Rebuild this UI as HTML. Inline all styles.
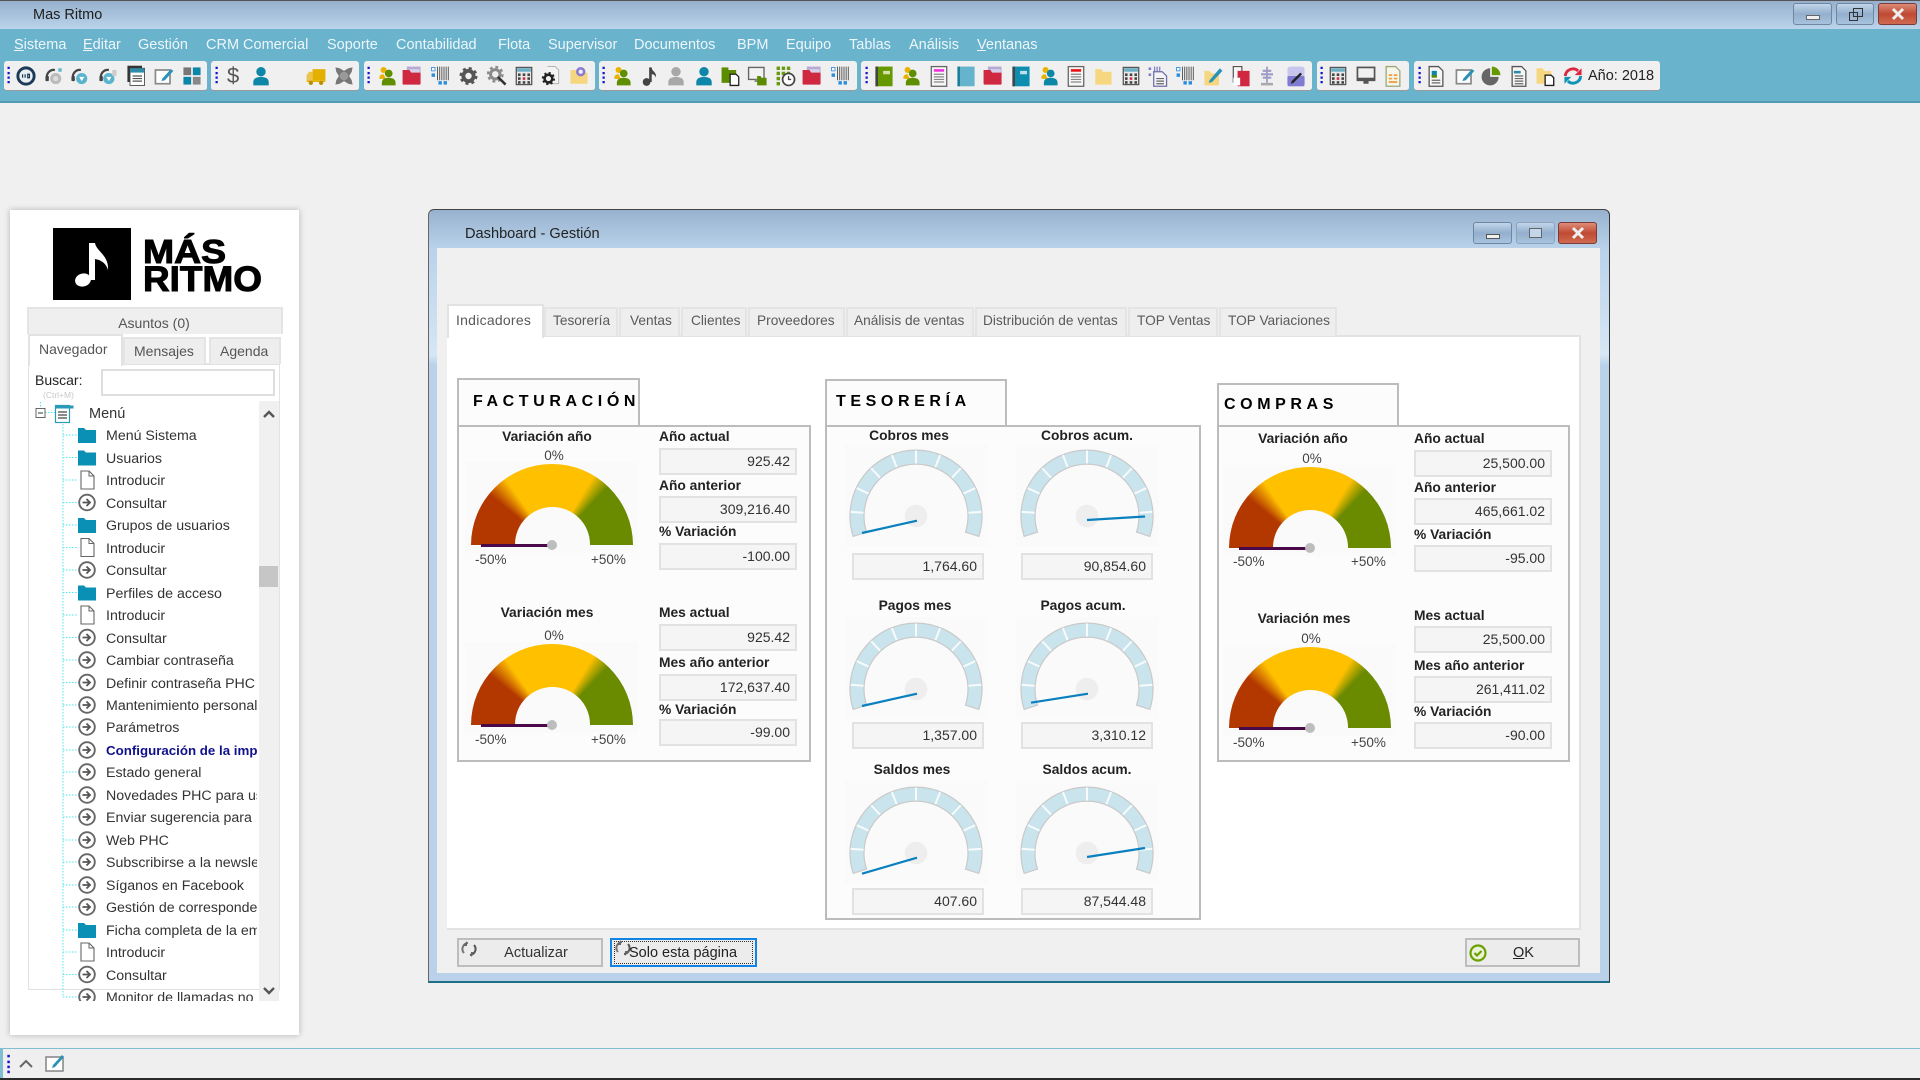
<!DOCTYPE html>
<html lang="es"><head><meta charset="utf-8"><title>Mas Ritmo</title>
<style>
html,body{margin:0;padding:0;width:1920px;height:1080px;overflow:hidden;background:#f0f0f0}
#root{position:relative;width:1920px;height:1080px;overflow:hidden;font-family:"Liberation Sans",sans-serif;font-size:14.5px;color:#333;filter:blur(.35px)}
#root div,#root span,#root svg{position:absolute}
#root u{position:static}
.t{white-space:nowrap;line-height:20px;height:20px}
.c{transform:translateX(-50%)}
.m{color:#eef6fa;top:35px}
.tb{top:61px;height:30px;background:#f0f0f0;border-radius:3px;border-bottom:1px solid #9a9a9a;box-sizing:border-box}
.wb{box-sizing:border-box;border:1px solid #6f86a3;border-radius:3px;background:linear-gradient(#c2d5ea,#93afcd 50%,#a8c3de)}
.wx{box-sizing:border-box;border:1px solid #7b3b3b;border-radius:3px;background:linear-gradient(#dd8c78,#bf4a33 50%,#cf6a50)}
.ptab{box-sizing:border-box;background:#eee;border:2px solid #e4e4e4;border-bottom:none}
.pl{font-size:13.7px;color:#5a5a5a}
.h{font-size:16px;font-weight:bold;color:#000;letter-spacing:4.6px}
.box{box-sizing:border-box;border:2px solid #bcbcbc;background:#fcfcfc}
.t.b{font-weight:bold;font-size:13.8px;color:#222;line-height:22px;height:22px}
.t.s{font-size:13.5px;color:#444;line-height:22px;height:22px}
.f{box-sizing:border-box;height:27px;width:138px;background:#f5f5f5;border:2px solid #e2e2e2;text-align:right;padding-right:5px;line-height:23px;font-size:14px;color:#333}
.f2{width:132px}
.cg{width:173px;height:91px;background:#fafafa}
.arc{left:6px;top:1.7px;width:162px;height:81px;overflow:hidden}
.disc{left:0;top:0;width:162px;height:162px;border-radius:50%;background:conic-gradient(from -90deg,#b33800 0 39deg,#ffc000 55deg 121deg,#6a8a00 134deg 180deg,transparent 180deg)}
.hole{left:43.5px;top:43.5px;width:75px;height:75px;border-radius:50%;background:#fafafa}
.nd{left:16px;top:82px;width:71px;height:2.5px;background:#4a0a4a}
.hub{left:82px;top:78px;width:10px;height:10px;border-radius:50%;background:#bdbdbd}
.sg{width:143px;height:102px;background:#fafafa}
.r{left:106px;width:151px;overflow:hidden;white-space:nowrap;line-height:22px;height:22px;color:#333;font-size:14.2px}
.btn{box-sizing:border-box;top:938px;height:29px;background:#ececec;border:2px solid #bdbdbd}
</style></head><body><div id="root">

<svg width="0" height="0" style="position:absolute">
<defs>
<symbol id="s-clk" viewBox="-2 -2 28 28"><circle cx="12" cy="12" r="9.500" fill="#e8eef2" stroke="#1d3b57" stroke-width="3.400"/><path d="M8 10v4M11 10v4M14 10h2v4h-2z" stroke="#1d3b57" stroke-width="1.400" fill="none"/></symbol>
<symbol id="s-hs1" viewBox="-2 -2 28 28"><path d="M4 15a8 8 0 0 1 9-10" fill="none" stroke="#444" stroke-width="2.600"/><rect x="2" y="12" width="4" height="6" rx="1" fill="#444"/><circle cx="14" cy="15" r="6.500" fill="#bbb"/><circle cx="14" cy="15" r="3" fill="#ddd"/><rect x="17" y="3" width="4" height="4" fill="#5fb8d0"/></symbol>
<symbol id="s-hs2" viewBox="-2 -2 28 28"><path d="M4 15a8 8 0 0 1 9-10" fill="none" stroke="#444" stroke-width="2.600"/><rect x="2" y="12" width="4" height="6" rx="1" fill="#444"/><circle cx="14" cy="15" r="6.500" fill="#5ab4ce"/><path d="M11 13l3 5 3-5z" fill="#fff"/></symbol>
<symbol id="s-hs3" viewBox="-2 -2 28 28"><path d="M4 15a8 8 0 0 1 9-10" fill="none" stroke="#444" stroke-width="2.600"/><rect x="2" y="12" width="4" height="6" rx="1" fill="#444"/><circle cx="13" cy="15" r="6.500" fill="#5ab4ce"/><path d="M10 13l3 5 3-5z" fill="#fff"/><rect x="17" y="5" width="5" height="7" fill="#ccc"/></symbol>
<symbol id="s-pg" viewBox="-2 -2 28 28"><rect x="2" y="0" width="17" height="19" fill="#333"/><rect x="5" y="3" width="17" height="20" fill="#fff" stroke="#444"/><rect x="5" y="3" width="17" height="5" fill="#2d8ca8"/><path d="M8 12h11M8 15h11M8 18h11" stroke="#555" stroke-width="1.400"/></symbol>
<symbol id="s-pen" viewBox="-2 -2 28 28"><rect x="2" y="5" width="17" height="16" fill="#fff" stroke="#8a8a8a" stroke-width="2"/><path d="M10 15l10-11 3 2-10 11-4 1z" fill="#2a93b5"/></symbol>
<symbol id="s-tile" viewBox="-2 -2 28 28"><rect x="2" y="2" width="9" height="9" fill="#777"/><rect x="13" y="2" width="9" height="9" fill="#0a86a8"/><rect x="2" y="13" width="9" height="9" fill="#0a86a8"/><rect x="13" y="13" width="9" height="9" fill="#888"/></symbol>
<symbol id="s-p" viewBox="-2 -2 28 28"><circle cx="12" cy="7" r="5.500" fill="currentColor"/><path d="M3 23v-4c0-4 4-6 9-6s9 2 9 6v4z" fill="currentColor"/></symbol>
<symbol id="s-py" viewBox="-2 -2 28 28"><circle cx="8" cy="5" r="3.500" fill="#e9b100"/><path d="M3 15c0-4 2-5 5-5l3 6z" fill="#e9b100"/><circle cx="14" cy="9" r="4.500" fill="currentColor"/><path d="M6 23v-3c0-4 3-6 8-6s8 2 8 6v3z" fill="currentColor"/></symbol>
<symbol id="s-trk" viewBox="-2 -2 28 28"><rect x="8" y="4" width="15" height="13" fill="#e4b000"/><path d="M1 11l3-4h4v10H1z" fill="#eec34a"/><rect x="1" y="17" width="22" height="2" fill="#e4b000"/><circle cx="6" cy="20" r="2.500" fill="#b98f00"/><circle cx="18" cy="20" r="2.500" fill="#b98f00"/></symbol>
<symbol id="s-x" viewBox="-2 -2 28 28"><path d="M2 2l5 1 5 3 5-3 5-1-1 5-3 5 3 5 1 5-5-1-5-3-5 3-5 1 1-5 3-5-3-5z" fill="#777"/><circle cx="12" cy="12" r="5" fill="#999"/></symbol>
<symbol id="s-fr" viewBox="-2 -2 28 28"><rect x="6" y="1" width="16" height="14" fill="#b7a9d6"/><rect x="9" y="4" width="12" height="5" fill="#d8d0ea"/><path d="M1 5h8l2 3h11v13a1 1 0 0 1-1 1H2a1 1 0 0 1-1-1z" fill="#cf2840"/></symbol>
<symbol id="s-bc" viewBox="-2 -2 28 28"><g stroke="#444" stroke-width="1"><path d="M8 1v16M10.500 1v16M13 1v16M15.500 1v16M18 1v16M20.500 1v16"/></g><rect x="1" y="2" width="4" height="4" fill="#fff" stroke="#2b8de0"/><rect x="1" y="9" width="4" height="4" fill="#2b8de0"/><rect x="9" y="18" width="4" height="4" fill="#2b8de0"/><rect x="15" y="18" width="4" height="4" fill="#2b8de0"/></symbol>
<symbol id="s-gear" viewBox="-2 -2 28 28"><circle cx="12" cy="12" r="6" fill="none" stroke="#555" stroke-width="4.500"/><circle cx="12" cy="12" r="9" fill="none" stroke="#555" stroke-width="3" stroke-dasharray="3.500 3.570"/></symbol>
<symbol id="s-gs" viewBox="-2 -2 28 28"><circle cx="10" cy="10" r="5.500" fill="none" stroke="#8a8a8a" stroke-width="3.500"/><circle cx="10" cy="10" r="8.500" fill="none" stroke="#8a8a8a" stroke-width="2.600" stroke-dasharray="3.300 3.350"/><path d="M13 13l9 9" stroke="#333" stroke-width="3"/></symbol>
<symbol id="s-calc" viewBox="-2 -2 28 28"><rect x="3" y="2" width="18" height="20" fill="#e9e9e9" stroke="#555" stroke-width="1.500"/><rect x="4" y="3" width="16" height="4" fill="#6ab0c7"/><g fill="#444"><rect x="5" y="9" width="3" height="3"/><rect x="10.500" y="9" width="3" height="3"/><rect x="16" y="9" width="3" height="3"/><rect x="5" y="13.500" width="3" height="3"/><rect x="16" y="13.500" width="3" height="3"/><rect x="5" y="18" width="3" height="3"/><rect x="10.500" y="18" width="3" height="3"/><rect x="16" y="18" width="3" height="3"/></g><rect x="10.500" y="13.500" width="3" height="3" fill="#d02a3e"/></symbol>
<symbol id="s-gd" viewBox="-2 -2 28 28"><path d="M8 1h9l4 4v16H10" fill="#f4f4f4" stroke="#aaa"/><circle cx="9" cy="15" r="4.500" fill="none" stroke="#222" stroke-width="3"/><circle cx="9" cy="15" r="6.500" fill="none" stroke="#222" stroke-width="2.400" stroke-dasharray="2.500 2.600"/></symbol>
<symbol id="s-fg" viewBox="-2 -2 28 28"><path d="M2 5h6l2 3h12v13H2z" fill="#f6d67f"/><circle cx="14" cy="7" r="4" fill="#f0f0f0" stroke="#8b7bd0" stroke-width="3"/></symbol>
<symbol id="s-note" viewBox="-2 -2 28 28"><circle cx="8" cy="19" r="4.500" fill="#444"/><path d="M11 19V2h3c0 5 6 5 5 12-1-3-3-4-5-4v9z" fill="#444"/></symbol>
<symbol id="s-gdoc" viewBox="-2 -2 28 28"><rect x="1" y="2" width="8" height="4" fill="#5b8c00"/><rect x="1" y="5" width="17" height="15" fill="#5b8c00"/><path d="M11 10h7l3 3v10H11z" fill="#fff" stroke="#222" stroke-width="1.500"/></symbol>
<symbol id="s-mon2" viewBox="-2 -2 28 28"><rect x="1" y="2" width="18" height="14" fill="#f2f2f2" stroke="#666" stroke-width="1.600"/><rect x="8" y="16" width="5" height="3" fill="#888"/><path d="M11 12h4l1 2h6v9H11z" fill="#5b8c00"/></symbol>
<symbol id="s-grid" viewBox="-2 -2 28 28"><g fill="#6a9a10"><rect x="1" y="1" width="4" height="4"/><rect x="7" y="1" width="4" height="4"/><rect x="13" y="1" width="4" height="4"/><rect x="1" y="7" width="4" height="4"/><rect x="7" y="7" width="4" height="4"/><rect x="13" y="7" width="4" height="4"/><rect x="1" y="13" width="4" height="4"/><rect x="1" y="19" width="4" height="4"/></g><circle cx="15" cy="16" r="7" fill="#fff" stroke="#444" stroke-width="2"/><path d="M15 12v4h3" stroke="#444" fill="none" stroke-width="1.500"/></symbol>
<symbol id="s-gb" viewBox="-2 -2 28 28"><rect x="2" y="1" width="20" height="23" fill="#669900"/><rect x="2" y="1" width="3" height="23" fill="#444"/><rect x="11" y="6" width="8" height="4" fill="#d5e0b0"/></symbol>
<symbol id="s-tk" viewBox="-2 -2 28 28"><rect x="2" y="1" width="20" height="23" fill="#0d8db0"/><rect x="2" y="1" width="3" height="23" fill="#444"/><rect x="11" y="6" width="8" height="4" fill="#bfe0ea"/></symbol>
<symbol id="s-tb2" viewBox="-2 -2 28 28"><rect x="2" y="1" width="20" height="23" fill="#65b3cc"/><rect x="2" y="1" width="3" height="23" fill="#1b7f9c"/></symbol>
<symbol id="s-pm" viewBox="-2 -2 28 28"><rect x="3" y="1" width="18" height="23" fill="#f6f6f6" stroke="#666" stroke-width="1.500"/><rect x="6" y="4" width="12" height="3" fill="currentColor"/><path d="M6 10h12M6 13h12M6 16h12M6 19h12" stroke="#888" stroke-width="1.400"/></symbol>
<symbol id="s-fy" viewBox="-2 -2 28 28"><path d="M3 4h7l2 3h10v15H3z" fill="#f6d67f"/></symbol>
<symbol id="s-dbc" viewBox="-2 -2 28 28"><g fill="#7f7fc8"><rect x="1" y="2" width="3" height="3"/><rect x="1" y="9" width="3" height="3"/><path d="M8 1v8M11 1v8M14 1v8" stroke="#7f7fc8" stroke-width="1.500"/></g><path d="M7 7h10l5 5v12H7z" fill="#f4f4f8" stroke="#6f6fa8" stroke-width="1.500"/><path d="M10 15h9M10 18h9M10 21h9" stroke="#666" stroke-width="1.400"/></symbol>
<symbol id="s-fp" viewBox="-2 -2 28 28"><path d="M2 6h6l2 3h9v14H2z" fill="#f6d67f"/><path d="M8 17L20 3l3 3-12 13-4 1z" fill="#2a93b5"/></symbol>
<symbol id="s-rd" viewBox="-2 -2 28 28"><path d="M3 1h10v18H3z" fill="#f6f6f6" stroke="#555" stroke-width="1.400"/><path d="M8 6h14v18H8z" fill="#cf2840"/><path d="M3 14h8v9H3z" fill="#fff"/></symbol>
<symbol id="s-tw" viewBox="-2 -2 28 28"><rect x="11" y="1" width="2" height="19" fill="#9e9bbf"/><path d="M7 6h10M5 10h14M7 14h10" stroke="#9e9bc8" stroke-width="2.500"/><rect x="5" y="20" width="14" height="3" fill="#aaa"/></symbol>
<symbol id="s-pp" viewBox="-2 -2 28 28"><rect x="2" y="1" width="20" height="23" rx="3" fill="#c9c6ee"/><rect x="2" y="12" width="20" height="12" rx="2" fill="#7e7bd0"/><path d="M7 18L17 8l2 2L9 20l-3 1z" fill="#222"/></symbol>
<symbol id="s-mon" viewBox="-2 -2 28 28"><rect x="2" y="2" width="20" height="15" fill="#f0f0f0" stroke="#555" stroke-width="2"/><rect x="2" y="14" width="20" height="3" fill="#555"/><rect x="9" y="17" width="6" height="4" fill="#555"/></symbol>
<symbol id="s-do" viewBox="-2 -2 28 28"><path d="M4 1h11l5 5v18H4z" fill="#f5f5ea" stroke="#9aa878" stroke-width="1.500"/><path d="M7 11h4M13 11h4M7 15h4M13 15h4M7 19h10" stroke="#f09a3a" stroke-width="2"/></symbol>
<symbol id="s-dc" viewBox="-2 -2 28 28"><path d="M4 1h11l5 5v18H4z" fill="#f6f6f6" stroke="#555" stroke-width="1.500"/><rect x="7" y="6" width="6" height="7" fill="#0a86a8"/><rect x="7" y="11" width="6" height="3" fill="#5b8c00"/><path d="M7 17h10M7 20h10" stroke="#666" stroke-width="1.400"/></symbol>
<symbol id="s-pie" viewBox="-2 -2 28 28"><path d="M11 3a10 10 0 1 0 10 10H11z" fill="#666"/><path d="M13 1a10 10 0 0 1 10 10H13z" fill="#669900"/></symbol>
<symbol id="s-dl" viewBox="-2 -2 28 28"><path d="M4 1h11l5 5v18H4z" fill="#f6f6f6" stroke="#555" stroke-width="1.500"/><rect x="6" y="6" width="8" height="3" fill="#2d8ca8"/><path d="M7 12h10M7 15h10M7 18h10M7 21h10" stroke="#666" stroke-width="1.400"/></symbol>
<symbol id="s-fd" viewBox="-2 -2 28 28"><path d="M1 3h7l2 3h8v15H1z" fill="#f6d67f"/><path d="M11 11h7l3 3v9H11z" fill="#fff" stroke="#222" stroke-width="1.600"/></symbol>
<symbol id="s-sync" viewBox="-2 -2 28 28"><path d="M3 12a9 9 0 0 1 15-6" fill="none" stroke="#d9283f" stroke-width="3.400"/><path d="M22 3v8h-8z" fill="#d9283f"/><path d="M21 12a9 9 0 0 1-15 6" fill="none" stroke="#0f93b5" stroke-width="3.400"/><path d="M2 21v-8h8z" fill="#0f93b5"/></symbol>
<symbol id="s-grip" viewBox="0 0 4 24"><g fill="#1515d0"><rect x="0" y="1" width="3" height="3"/><rect x="0" y="8" width="3" height="3"/><rect x="0" y="14" width="3" height="3"/><rect x="0" y="20" width="3" height="3"/></g></symbol>
<symbol id="t-f" viewBox="0 0 20 20"><path d="M1 3h6l2 2h10v13H1z" fill="#0a8fb5"/></symbol>
<symbol id="t-d" viewBox="0 0 20 20"><path d="M4 1h8l5 5v13H4z" fill="#fff" stroke="#666" stroke-width="1.100"/><path d="M12 1v5h5" fill="none" stroke="#666" stroke-width="1"/></symbol>
<symbol id="t-c" viewBox="0 0 20 20"><circle cx="10" cy="10" r="7.800" fill="#fff" stroke="#666" stroke-width="1.900"/><path d="M5.500 10h7M9.500 6.500l3.500 3.500-3.500 3.500" fill="none" stroke="#555" stroke-width="1.800"/></symbol>
<symbol id="g-sp" viewBox="-72 -72 144 102">
<path d="M-62.800 20.400A66 66 0 1 1 62.800 20.400L49.500 16.070A52 52 0 1 0-49.500 16.070Z" fill="#c9e4ec" stroke="#c9c9c9" stroke-width="1.200"/>
<g stroke="#f8fbfc" stroke-width="2">
<path d="M0-52.500V-65.500" /><path d="M0-52.500V-65.500" transform="rotate(21.600)"/><path d="M0-52.500V-65.500" transform="rotate(43.200)"/><path d="M0-52.500V-65.500" transform="rotate(64.800)"/><path d="M0-52.500V-65.500" transform="rotate(86.400)"/><path d="M0-52.500V-65.500" transform="rotate(-21.600)"/><path d="M0-52.500V-65.500" transform="rotate(-43.200)"/><path d="M0-52.500V-65.500" transform="rotate(-64.800)"/><path d="M0-52.500V-65.500" transform="rotate(-86.400)"/>
</g>
<circle cx="0" cy="0" r="11.300" fill="#eeeeee"/></symbol>
<symbol id="i-rf" viewBox="0 0 16 16"><path d="M7 2A6 6 0 0 0 3 12" fill="none" stroke="#777" stroke-width="2"/><path d="M9 14a6 6 0 0 0 4-10" fill="none" stroke="#555" stroke-width="2"/><path d="M6 0v5H2zM10 16v-5h4z" fill="#666"/></symbol>
</defs></svg>

<!-- main title -->
<div style="left:0;top:0;width:1920px;height:1px;background:#555"></div>
<div style="left:0;top:1px;width:1920px;height:28px;background:linear-gradient(#97b0cd,#bbd4eb)"></div>
<div class="t" style="left:33px;top:5px;color:#1e1e1e;font-size:14.5px">Mas Ritmo</div>
<div class="wb" style="left:1793px;top:3px;width:39px;height:22px"><div style="left:12px;top:11px;width:14px;height:5px;background:#f0f0f0;border:1px solid #666;box-sizing:border-box"></div></div>
<div class="wb" style="left:1836px;top:3px;width:38px;height:22px"><div style="left:12px;top:8px;width:9px;height:9px;border:1.500px solid #333;box-sizing:border-box"></div><div style="left:16px;top:4px;width:10px;height:9px;border:1.500px solid #333;box-sizing:border-box"></div></div>
<div class="wx" style="left:1878px;top:3px;width:39px;height:22px"><svg style="left:12px;top:3px" width="14" height="14" viewBox="0 0 14 14"><path d="M2 2l10 10M12 2L2 12" stroke="#eee" stroke-width="3"/></svg></div>

<!-- menu -->
<div style="left:0;top:29px;width:1920px;height:72px;background:#69b3cc"></div>
<div style="left:0;top:101px;width:1920px;height:2px;background:#4f9cb4"></div>
<div class="t m" style="left:14px"><u>S</u>istema</div>
<div class="t m" style="left:83px"><u>E</u>ditar</div>
<div class="t m" style="left:138px">Gestión</div>
<div class="t m" style="left:206px">CRM Comercial</div>
<div class="t m" style="left:327px">Soporte</div>
<div class="t m" style="left:396px">Contabilidad</div>
<div class="t m" style="left:498px">Flota</div>
<div class="t m" style="left:548px">Supervisor</div>
<div class="t m" style="left:634px">Documentos</div>
<div class="t m" style="left:737px">BPM</div>
<div class="t m" style="left:786px">Equipo</div>
<div class="t m" style="left:849px">Tablas</div>
<div class="t m" style="left:909px">Análisis</div>
<div class="t m" style="left:977px"><u>V</u>entanas</div>

<!-- toolbars -->
<div class="tb" style="left:4px;width:203px"></div>
<div class="tb" style="left:211px;width:148px"></div>
<div class="tb" style="left:364px;width:231px"></div>
<div class="tb" style="left:599px;width:258px"></div>
<div class="tb" style="left:861px;width:451px"></div>
<div class="tb" style="left:1317px;width:92px"></div>
<div class="tb" style="left:1414px;width:246px"></div>
<svg style="left:0;top:0" width="1920" height="120" viewBox="0 0 1920 120">
<g transform="translate(0,-18)">
<use href="#s-grip" x="7" y="84" width="4" height="18"/><use href="#s-grip" x="215" y="84" width="4" height="18"/><use href="#s-grip" x="367" y="84" width="4" height="18"/><use href="#s-grip" x="602" y="84" width="4" height="18"/><use href="#s-grip" x="865" y="84" width="4" height="18"/><use href="#s-grip" x="1320" y="84" width="4" height="18"/><use href="#s-grip" x="1418" y="84" width="4" height="18"/>
<use href="#s-clk" x="14" y="82" width="24" height="24"/><use href="#s-hs1" x="42" y="82" width="24" height="24"/><use href="#s-hs2" x="68" y="82" width="24" height="24"/><use href="#s-hs3" x="96" y="82" width="24" height="24"/><use href="#s-pg" x="124" y="82" width="24" height="24"/><use href="#s-pen" x="152" y="82" width="24" height="24"/><use href="#s-tile" x="180" y="82" width="24" height="24"/>
<use href="#s-p" x="249" y="82" width="24" height="24" style="color:#0d86a8"/><use href="#s-trk" x="304" y="82" width="24" height="24"/><use href="#s-x" x="332" y="82" width="24" height="24"/>
<use href="#s-py" x="375" y="82" width="24" height="24" style="color:#5f8f00"/><use href="#s-fr" x="400" y="82" width="24" height="24"/><use href="#s-bc" x="429" y="82" width="24" height="24"/><use href="#s-gear" x="456.500" y="82" width="24" height="24"/><use href="#s-gs" x="485" y="82" width="24" height="24"/><use href="#s-calc" x="512" y="82" width="24" height="24"/><use href="#s-gd" x="539" y="82" width="24" height="24"/><use href="#s-fg" x="567" y="82" width="24" height="24"/>
<use href="#s-py" x="610" y="82" width="24" height="24" style="color:#5f8f00"/><use href="#s-note" x="638" y="82" width="24" height="24"/><use href="#s-p" x="664" y="82" width="24" height="24" style="color:#a8a8a8"/><use href="#s-p" x="692" y="82" width="24" height="24" style="color:#0d86a8"/><use href="#s-gdoc" x="719" y="82" width="24" height="24"/><use href="#s-mon2" x="746" y="82" width="24" height="24"/><use href="#s-grid" x="774" y="82" width="24" height="24"/><use href="#s-fr" x="800" y="82" width="24" height="24"/><use href="#s-bc" x="829" y="82" width="24" height="24"/>
<use href="#s-gb" x="872" y="82" width="24" height="24"/><use href="#s-py" x="899" y="82" width="24" height="24" style="color:#5f8f00"/><use href="#s-pm" x="927" y="82" width="24" height="24" style="color:#ee2fe0"/><use href="#s-tb2" x="954" y="82" width="24" height="24"/><use href="#s-fr" x="981" y="82" width="24" height="24"/><use href="#s-tk" x="1009" y="82" width="24" height="24"/><use href="#s-py" x="1037" y="82" width="24" height="24" style="color:#0d86a8"/><use href="#s-pm" x="1064" y="82" width="24" height="24" style="color:#e81010"/><use href="#s-fy" x="1091" y="82" width="24" height="24"/><use href="#s-calc" x="1119" y="82" width="24" height="24"/><use href="#s-dbc" x="1146" y="82" width="24" height="24"/><use href="#s-bc" x="1174" y="82" width="24" height="24"/><use href="#s-fp" x="1201" y="82" width="24" height="24"/><use href="#s-rd" x="1229" y="82" width="24" height="24"/><use href="#s-tw" x="1255" y="82" width="24" height="24"/><use href="#s-pp" x="1284" y="82" width="24" height="24"/>
<use href="#s-calc" x="1326" y="82" width="24" height="24"/><use href="#s-mon" x="1354" y="82" width="24" height="24"/><use href="#s-do" x="1381" y="82" width="24" height="24"/>
<use href="#s-dc" x="1424" y="82" width="24" height="24"/><use href="#s-pen" x="1453" y="82" width="24" height="24"/><use href="#s-pie" x="1479" y="82" width="24" height="24"/><use href="#s-dl" x="1507" y="82" width="24" height="24"/><use href="#s-fd" x="1534" y="82" width="24" height="24"/><use href="#s-sync" x="1561" y="82" width="24" height="24"/>
</g></svg>
<div class="t" style="left:227px;top:64px;font-size:22px;line-height:24px;height:24px;color:#555">$</div>
<div class="t" style="left:1588px;top:66px;font-size:14.500px;color:#222">Año: 2018</div>

<!-- left panel -->
<div style="left:10px;top:210px;width:289px;height:825px;background:#fff;box-shadow:0 0 6px rgba(0,0,0,.25)"></div>
<div style="left:53px;top:228px;width:78px;height:72px;background:#000"></div>
<svg style="left:53px;top:228px" width="78" height="72" viewBox="0 0 78 72"><ellipse cx="30" cy="52" rx="8" ry="6.500" fill="#fff" transform="rotate(-15 30 52)"/><path d="M36 52V15h6c1 8 14 12 13 27-2-7-7-10-13-11v21z" fill="#fff"/></svg>
<svg style="left:140px;top:232px" width="130" height="64" viewBox="0 0 130 64"><text x="3" y="31" font-family="Liberation Sans" font-weight="bold" font-size="33" stroke="#000" stroke-width="1" textLength="83" lengthAdjust="spacingAndGlyphs">MÁS</text><text x="3" y="59" font-family="Liberation Sans" font-weight="bold" font-size="35" stroke="#000" stroke-width="1" textLength="119" lengthAdjust="spacingAndGlyphs">RITMO</text></svg>

<div style="left:27px;top:307px;width:256px;height:27px;box-sizing:border-box;background:#efefef;border:2px solid #e4e4e4;border-bottom:none"></div>
<div class="t c" style="left:154px;top:313px;color:#555;font-size:14px">Asuntos (0)</div>
<div style="left:28px;top:363px;width:252px;height:627px;box-sizing:border-box;background:#fff;border:1px solid #e2e2e2;border-top:2px solid #e2e2e2"></div>
<div class="ptab" style="left:123px;top:337px;width:83px;height:27px"></div>
<div class="ptab" style="left:209px;top:337px;width:72px;height:27px"></div>
<div style="left:28px;top:334px;width:95px;height:32px;box-sizing:border-box;background:#fff;border:2px solid #e2e2e2;border-bottom:none"></div>
<div class="t" style="left:39px;top:339px;color:#555;font-size:14px">Navegador</div>
<div class="t" style="left:134px;top:341px;color:#555;font-size:14px">Mensajes</div>
<div class="t" style="left:220px;top:341px;color:#555;font-size:14px">Agenda</div>
<div class="t" style="left:35px;top:370px;color:#222;font-size:14px">Buscar:</div>
<div class="t" style="left:43px;top:385px;color:#c8c8c8;font-size:8.500px">(Ctrl+M)</div>
<div style="left:101px;top:369px;width:174px;height:27px;box-sizing:border-box;background:#fff;border:2px solid #dedede"></div>

<div style="left:259px;top:401px;width:20px;height:600px;background:#f0f0f0"></div>
<div style="left:259px;top:566px;width:19px;height:21px;background:#c6c6c6"></div>
<svg style="left:259px;top:401px" width="20" height="600" viewBox="0 0 20 600"><path d="M5 16l5-5 5 5M5 587l5 5 5-5" fill="none" stroke="#555" stroke-width="2.400"/></svg>

<svg style="left:0;top:401px" width="259" height="600" viewBox="0 401 259 600">
<path d="M40.500 402v7M45 412.500h10M63 424V997" stroke="#4fe8f0" stroke-width="1" stroke-dasharray="1.500 1.500" fill="none"/>
<path d="M63 435h15M63 457.500h15M63 480h15M63 502.500h15M63 525h15M63 547.500h15M63 570h15M63 592.500h15M63 615h15M63 637.500h15M63 660h15M63 682.500h15M63 705h15M63 727h15M63 750h15M63 772h15M63 795h15M63 817h15M63 840h15M63 862h15M63 885h15M63 907h15M63 930h15M63 952h15M63 974.500h15M63 997h15" stroke="#4fe8f0" stroke-dasharray="1.500 1.500" fill="none"/>
<rect x="36" y="408.500" width="9" height="9" fill="#fff" stroke="#666"/><path d="M38 413h5" stroke="#333"/>
<rect x="55.500" y="405.500" width="14" height="17" fill="#fff" stroke="#2b9ab8" stroke-width="1.200"/><rect x="55.500" y="405.500" width="18" height="3" fill="#2b9ab8"/><path d="M58 412h9M58 415h9M58 418h9" stroke="#444" stroke-width="1.200"/>
<g>
<use href="#t-f" x="77" y="425" width="20" height="20"/><use href="#t-f" x="77" y="447.500" width="20" height="20"/><use href="#t-d" x="77" y="470" width="20" height="20"/><use href="#t-c" x="77" y="492.500" width="20" height="20"/><use href="#t-f" x="77" y="515" width="20" height="20"/><use href="#t-d" x="77" y="537.500" width="20" height="20"/><use href="#t-c" x="77" y="560" width="20" height="20"/><use href="#t-f" x="77" y="582.500" width="20" height="20"/><use href="#t-d" x="77" y="605" width="20" height="20"/><use href="#t-c" x="77" y="627.500" width="20" height="20"/><use href="#t-c" x="77" y="650" width="20" height="20"/><use href="#t-c" x="77" y="672.500" width="20" height="20"/><use href="#t-c" x="77" y="695" width="20" height="20"/><use href="#t-c" x="77" y="717" width="20" height="20"/><use href="#t-c" x="77" y="740" width="20" height="20"/><use href="#t-c" x="77" y="762" width="20" height="20"/><use href="#t-c" x="77" y="785" width="20" height="20"/><use href="#t-c" x="77" y="807" width="20" height="20"/><use href="#t-c" x="77" y="830" width="20" height="20"/><use href="#t-c" x="77" y="852" width="20" height="20"/><use href="#t-c" x="77" y="875" width="20" height="20"/><use href="#t-c" x="77" y="897" width="20" height="20"/><use href="#t-f" x="77" y="920" width="20" height="20"/><use href="#t-d" x="77" y="942" width="20" height="20"/><use href="#t-c" x="77" y="964.500" width="20" height="20"/><use href="#t-c" x="77" y="987" width="20" height="20"/>
</g></svg>

<div class="t" style="left:89px;top:403.500px">Menú</div>
<div style="left:0;top:401px;width:259px;height:600px;overflow:hidden">
<div class="r" style="top:24px">Menú Sistema</div>
<div class="r" style="top:46.500px">Usuarios</div>
<div class="r" style="top:69px">Introducir</div>
<div class="r" style="top:91.500px">Consultar</div>
<div class="r" style="top:114px">Grupos de usuarios</div>
<div class="r" style="top:136.500px">Introducir</div>
<div class="r" style="top:159px">Consultar</div>
<div class="r" style="top:181.500px">Perfiles de acceso</div>
<div class="r" style="top:204px">Introducir</div>
<div class="r" style="top:226.500px">Consultar</div>
<div class="r" style="top:249px">Cambiar contraseña</div>
<div class="r" style="top:271.500px">Definir contraseña PHC</div>
<div class="r" style="top:294px">Mantenimiento personal</div>
<div class="r" style="top:316px">Parámetros</div>
<div class="r" style="top:339px;color:#10108c;font-weight:bold;font-size:13.300px">Configuración de la imp</div>
<div class="r" style="top:361px">Estado general</div>
<div class="r" style="top:384px">Novedades PHC para us</div>
<div class="r" style="top:406px">Enviar sugerencia para</div>
<div class="r" style="top:429px">Web PHC</div>
<div class="r" style="top:451px">Subscribirse a la newsle</div>
<div class="r" style="top:474px">Síganos en Facebook</div>
<div class="r" style="top:496px">Gestión de correspondencia</div>
<div class="r" style="top:519px">Ficha completa de la em</div>
<div class="r" style="top:541px">Introducir</div>
<div class="r" style="top:563.500px">Consultar</div>
<div class="r" style="top:586px">Monitor de llamadas no</div>
</div>

<!-- status bar -->
<div style="left:0;top:1048px;width:1920px;height:30px;box-sizing:border-box;background:#efefef;border-top:1px solid #7fbdd0;border-left:3px solid #7fbdd0"></div>
<div style="left:0;top:1078px;width:1920px;height:2px;background:#2a2a2a"></div>
<svg style="left:0;top:1050px" width="80" height="28" viewBox="0 0 80 28"><use href="#s-grip" x="7" y="4" width="4" height="20"/><path d="M20 17l6-6 6 6" fill="none" stroke="#666" stroke-width="2"/><rect x="46" y="7" width="17" height="14" fill="#fff" stroke="#8a8a8a" stroke-width="1.600"/><path d="M53 15l9-10 2 2-9 10-3 1z" fill="#2a93b5"/></svg>

<!-- dialog -->
<div style="left:428px;top:209px;width:1182px;height:774px;box-sizing:border-box;border-top:1px solid #444;border-left:1px solid #666;border-right:1px solid #333;border-bottom:2px solid #1d6f85;border-radius:6px 6px 0 0;background:linear-gradient(#98b1ce 0,#b9d2ea 38px,#d6e6f4 145px,#b9d2ea 155px,#b9d2ea 100%)"></div>
<div style="left:437px;top:248px;width:1163px;height:725px;background:#f0f0f0"></div>
<div class="t" style="left:465px;top:224px;color:#222;font-size:14.600px">Dashboard - Gestión</div>
<div class="wb" style="left:1473px;top:222px;width:39px;height:22px"><div style="left:12px;top:11px;width:14px;height:5px;background:#f0f0f0;border:1px solid #555;box-sizing:border-box"></div></div>
<div class="wb" style="left:1516px;top:222px;width:39px;height:22px;border-color:#8ca3be"><div style="left:12px;top:5px;width:13px;height:10px;border:1.500px solid #666;box-sizing:border-box;background:#c4d6ea"></div></div>
<div class="wx" style="left:1558px;top:222px;width:39px;height:22px"><svg style="left:12px;top:3px" width="14" height="14" viewBox="0 0 14 14"><path d="M2 2l10 10M12 2L2 12" stroke="#eee" stroke-width="3"/></svg></div>

<!-- tab page -->
<div style="left:447px;top:335px;width:1134px;height:595px;background:#fff;box-sizing:border-box;border:2px solid #e2e2e2;border-left:none"></div>
<div class="ptab" style="left:544px;top:307px;width:74px;height:29px"></div>
<div class="ptab" style="left:619px;top:307px;width:61px;height:29px"></div>
<div class="ptab" style="left:681px;top:307px;width:66px;height:29px"></div>
<div class="ptab" style="left:748px;top:307px;width:97px;height:29px"></div>
<div class="ptab" style="left:846px;top:307px;width:128px;height:29px"></div>
<div class="ptab" style="left:975px;top:307px;width:152px;height:29px"></div>
<div class="ptab" style="left:1128px;top:307px;width:90px;height:29px"></div>
<div class="ptab" style="left:1219px;top:307px;width:118px;height:29px"></div>
<div style="left:447px;top:304px;width:97px;height:34px;box-sizing:border-box;background:#fff;border:2px solid #e2e2e2;border-bottom:none"></div>
<div class="t pl" style="left:456px;top:310px;font-size:14px;letter-spacing:.25px">Indicadores</div>
<div class="t pl" style="left:553px;top:311px">Tesorería</div>
<div class="t pl" style="left:630px;top:311px">Ventas</div>
<div class="t pl" style="left:691px;top:311px">Clientes</div>
<div class="t pl" style="left:757px;top:311px">Proveedores</div>
<div class="t pl" style="left:854px;top:311px">Análisis de ventas</div>
<div class="t pl" style="left:983px;top:311px">Distribución de ventas</div>
<div class="t pl" style="left:1137px;top:311px">TOP Ventas</div>
<div class="t pl" style="left:1228px;top:311px">TOP Variaciones</div>

<!-- FACTURACION -->
<div class="box" style="left:457px;top:378px;width:183px;height:49px"></div>
<div class="box" style="left:457px;top:425px;width:354px;height:337px"></div>
<div class="t h" style="left:473px;top:392px">FACTURACIÓN</div>
<div class="t b c" style="left:547px;top:426px">Variación año</div>
<div class="t s c" style="left:554px;top:445px">0%</div>
<div class="cg" style="left:465px;top:462px"><div class="arc"><div class="disc"></div><div class="hole"></div></div><div class="nd"></div><div class="hub"></div></div>
<div class="t s" style="left:475px;top:549px">-50%</div><div class="t s" style="left:591px;top:549px">+50%</div>
<div class="t b" style="left:659px;top:426px">Año actual</div><div class="f" style="left:659px;top:448px">925.42</div>
<div class="t b" style="left:659px;top:475px">Año anterior</div><div class="f" style="left:659px;top:496px">309,216.40</div>
<div class="t b" style="left:659px;top:521px">% Variación</div><div class="f" style="left:659px;top:543px">-100.00</div>
<div class="t b c" style="left:547px;top:602px">Variación mes</div>
<div class="t s c" style="left:554px;top:625px">0%</div>
<div class="cg" style="left:465px;top:642px"><div class="arc"><div class="disc"></div><div class="hole"></div></div><div class="nd"></div><div class="hub"></div></div>
<div class="t s" style="left:475px;top:729px">-50%</div><div class="t s" style="left:591px;top:729px">+50%</div>
<div class="t b" style="left:659px;top:602px">Mes actual</div><div class="f" style="left:659px;top:624px">925.42</div>
<div class="t b" style="left:659px;top:652px">Mes año anterior</div><div class="f" style="left:659px;top:674px">172,637.40</div>
<div class="t b" style="left:659px;top:699px">% Variación</div><div class="f" style="left:659px;top:719px">-99.00</div>

<!-- TESORERIA -->
<div class="box" style="left:825px;top:379px;width:182px;height:48px"></div>
<div class="box" style="left:825px;top:425px;width:376px;height:495px"></div>
<div class="t h" style="left:836px;top:392px">TESORERÍA</div>
<div class="sg" style="left:845px;top:444px"></div><div class="sg" style="left:1016px;top:444px"></div>
<div class="sg" style="left:845px;top:617px"></div><div class="sg" style="left:1016px;top:617px"></div>
<div class="sg" style="left:845px;top:781px"></div><div class="sg" style="left:1016px;top:781px"></div>
<svg style="left:0;top:0;pointer-events:none" width="1920" height="1080" viewBox="0 0 1920 1080">
<use href="#g-sp" x="844" y="444" width="144" height="102"/><use href="#g-sp" x="1015" y="444" width="144" height="102"/>
<use href="#g-sp" x="844" y="617" width="144" height="102"/><use href="#g-sp" x="1015" y="617" width="144" height="102"/>
<use href="#g-sp" x="844" y="781" width="144" height="102"/><use href="#g-sp" x="1015" y="781" width="144" height="102"/>
<g stroke="#0a80bf" stroke-width="2.200" fill="none">
<path d="M917 520.700L862 533"/><path d="M1087 520L1145 516.500"/>
<path d="M917 693.700L862 706"/><path d="M1088 693.700L1031 702.700"/>
<path d="M917 857.700L862 873.700"/><path d="M1087 857L1145 848"/>
</g></svg>
<div class="t b c" style="left:909px;top:425px">Cobros mes</div><div class="t b c" style="left:1087px;top:425px">Cobros acum.</div>
<div class="f f2" style="left:852px;top:553px">1,764.60</div><div class="f f2" style="left:1021px;top:553px">90,854.60</div>
<div class="t b c" style="left:915px;top:595px">Pagos mes</div><div class="t b c" style="left:1083px;top:595px">Pagos acum.</div>
<div class="f f2" style="left:852px;top:722px">1,357.00</div><div class="f f2" style="left:1021px;top:722px">3,310.12</div>
<div class="t b c" style="left:912px;top:759px">Saldos mes</div><div class="t b c" style="left:1087px;top:759px">Saldos acum.</div>
<div class="f f2" style="left:852px;top:888px">407.60</div><div class="f f2" style="left:1021px;top:888px">87,544.48</div>

<!-- COMPRAS -->
<div class="box" style="left:1217px;top:383px;width:182px;height:44px"></div>
<div class="box" style="left:1217px;top:425px;width:353px;height:337px"></div>
<div class="t h" style="left:1224px;top:395px">COMPRAS</div>
<div class="t b c" style="left:1303px;top:428px">Variación año</div>
<div class="t s c" style="left:1312px;top:448px">0%</div>
<div class="cg" style="left:1223px;top:465px"><div class="arc"><div class="disc"></div><div class="hole"></div></div><div class="nd"></div><div class="hub"></div></div>
<div class="t s" style="left:1233px;top:551px">-50%</div><div class="t s" style="left:1351px;top:551px">+50%</div>
<div class="t b" style="left:1414px;top:428px">Año actual</div><div class="f" style="left:1414px;top:450px">25,500.00</div>
<div class="t b" style="left:1414px;top:477px">Año anterior</div><div class="f" style="left:1414px;top:498px">465,661.02</div>
<div class="t b" style="left:1414px;top:524px">% Variación</div><div class="f" style="left:1414px;top:545px">-95.00</div>
<div class="t b c" style="left:1304px;top:608px">Variación mes</div>
<div class="t s c" style="left:1311px;top:628px">0%</div>
<div class="cg" style="left:1223px;top:645px"><div class="arc"><div class="disc"></div><div class="hole"></div></div><div class="nd"></div><div class="hub"></div></div>
<div class="t s" style="left:1233px;top:732px">-50%</div><div class="t s" style="left:1351px;top:732px">+50%</div>
<div class="t b" style="left:1414px;top:605px">Mes actual</div><div class="f" style="left:1414px;top:626px">25,500.00</div>
<div class="t b" style="left:1414px;top:655px">Mes año anterior</div><div class="f" style="left:1414px;top:676px">261,411.02</div>
<div class="t b" style="left:1414px;top:701px">% Variación</div><div class="f" style="left:1414px;top:722px">-90.00</div>

<!-- buttons -->
<div class="btn" style="left:457px;width:146px"></div>
<svg style="left:461px;top:941px" width="16" height="16" viewBox="0 0 16 16"><use href="#i-rf" width="16" height="16"/></svg>
<div class="t c" style="left:536px;top:943px;color:#333">Actualizar</div>
<div class="btn" style="left:610px;width:147px;border-color:#1284e6"></div>
<div style="left:614px;top:941px;width:139px;height:23px;box-sizing:border-box;border:1.500px dotted #333"></div>
<svg style="left:615px;top:940px" width="16" height="16" viewBox="0 0 16 16"><use href="#i-rf" width="16" height="16"/></svg>
<div class="t" style="left:629px;top:943px;color:#222">Solo esta página</div>
<div class="btn" style="left:1465px;width:115px"></div>
<svg style="left:1469px;top:944px" width="18" height="18" viewBox="0 0 18 18"><circle cx="9" cy="9" r="7.500" fill="#eaf3d8" stroke="#6ba000" stroke-width="2.200"/><path d="M5.500 9l2.500 2.500 4.500-4.500" fill="none" stroke="#6ba000" stroke-width="2.200"/></svg>
<div class="t" style="left:1513px;top:943px;color:#222"><u>O</u>K</div>

</div></body></html>
